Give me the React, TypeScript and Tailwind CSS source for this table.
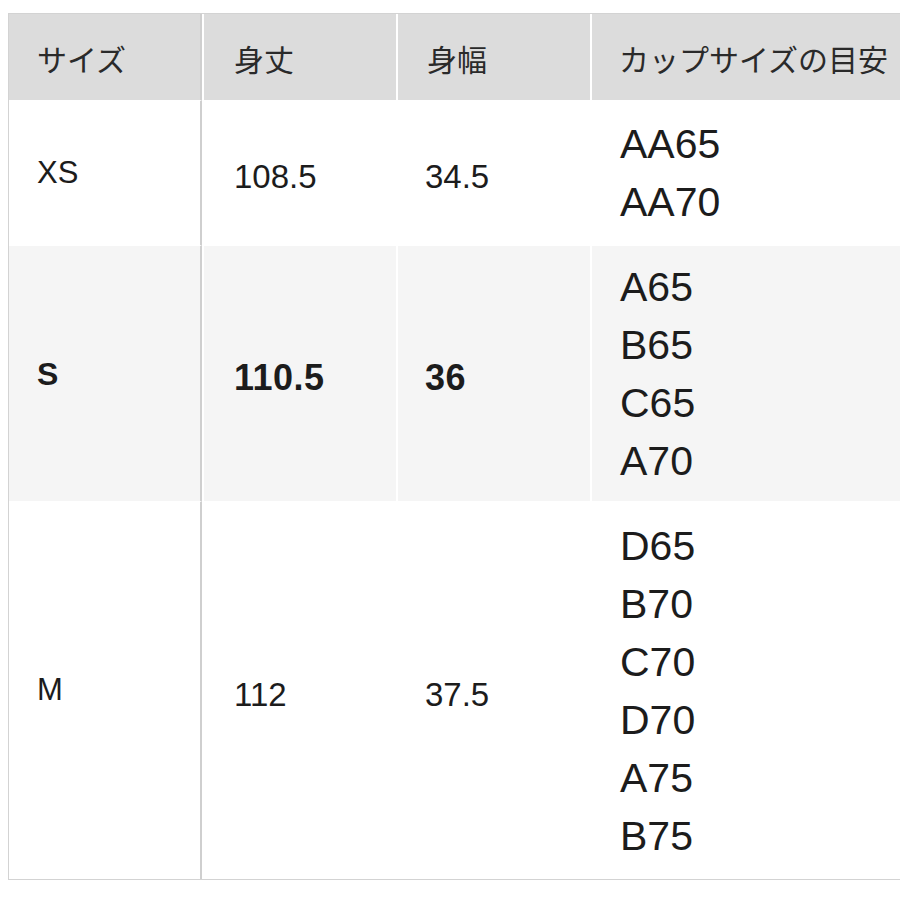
import React from "react";

const rows = [
  { size: "XS", len: "108.5", wid: "34.5", cups: ["AA65", "AA70"], bg: "bg-white", bold: false },
  { size: "S", len: "110.5", wid: "36", cups: ["A65", "B65", "C65", "A70"], bg: "bg-[#f5f5f5]", bold: true },
  { size: "M", len: "112", wid: "37.5", cups: ["D65", "B70", "C70", "D70", "A75", "B75"], bg: "bg-white", bold: false },
];

export default function App() {
  return (
    <div className="w-[900px] h-[900px] overflow-hidden bg-white pl-[8px] pt-[13px] font-['Liberation_Sans','Noto_Sans_CJK_JP',sans-serif] text-[#1c1c1c]">
      <div className="w-[930px] border border-[#d3d3d3] grid grid-cols-[193px_194px_194px_1fr] grid-rows-[87px_145px_256px_377px]">
        <div className="bg-[#dcdcdc] border-r-2 border-r-[#cfcfcf] border-b border-b-white flex items-center pl-[28px] pt-[6px] text-[30px] text-[#2a2a2a]">サイズ</div>
        <div className="bg-[#dcdcdc] border-l-2 border-l-white border-b border-b-white flex items-center pl-[30px] pt-[6px] text-[30px] text-[#2a2a2a]">身丈</div>
        <div className="bg-[#dcdcdc] border-l-2 border-l-white border-b border-b-white flex items-center pl-[29px] pt-[6px] text-[30px] text-[#2a2a2a]">身幅</div>
        <div className="bg-[#dcdcdc] border-l-2 border-l-white border-b border-b-white flex items-center pl-[27px] pt-[6px] text-[30px] text-[#2a2a2a]">カップサイズの目安</div>
        {rows.map((r, i) => (
          <React.Fragment key={r.size}>
            <div className={`${r.bg} border-r-2 border-r-[#cfcfcf] ${i < 2 ? "border-b border-b-white" : ""} flex items-center pl-[28px] ${r.bold ? "font-bold text-[32px]" : "text-[31px]"}`}>
              {r.size}
            </div>
            <div className={`${r.bg} border-l-2 border-l-white ${i < 2 ? "border-b border-b-white" : ""} flex items-center pl-[30px] pt-[8px] ${r.bold ? "font-bold text-[36px] tracking-[0.5px]" : "text-[33px]"}`}>
              {r.len}
            </div>
            <div className={`${r.bg} border-l-2 border-l-white ${i < 2 ? "border-b border-b-white" : ""} flex items-center pl-[27px] pt-[8px] ${r.bold ? "font-bold text-[36px] tracking-[0.5px]" : "text-[33px]"}`}>
              {r.wid}
            </div>
            <div className={`${r.bg} border-l-2 border-l-white ${i < 2 ? "border-b border-b-white" : ""} flex flex-col justify-center pl-[28px] text-[41px] leading-[58px]`}>
              {r.cups.map((c) => (
                <div key={c}>{c}</div>
              ))}
            </div>
          </React.Fragment>
        ))}
      </div>
    </div>
  );
}
